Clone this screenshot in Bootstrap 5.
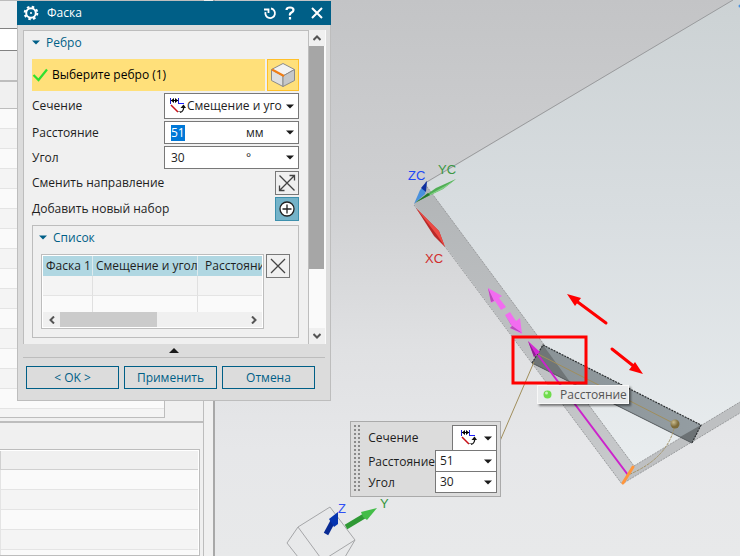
<!DOCTYPE html>
<html lang="ru">
<head>
<meta charset="utf-8">
<meta name="viewport" content="width=device-width, initial-scale=1">
<title>Фаска</title>
<link rel="stylesheet" href="https://cdn.jsdelivr.net/npm/bootstrap@5.3.0/dist/css/bootstrap.min.css">
<style>
  body { font: 12px/16px "Open Sans", "Noto Sans", sans-serif; color: #1e1e1e; background: #f0f0f0; overflow: hidden; }
  button, input, select { font: inherit; color: inherit; border-radius: 0; }
  svg { display: block; flex: none; }

  /* Navigator behind the dialog */
  .navigator { width: 215px; border-right: 2px solid #a8a8a8; overflow: hidden; }
  .nav-inner { border-right: 1px solid #bdbdbd; margin-right: 9px; }
  .nav-strip { height: 28px; border-top: 1px solid #bdbdbd; }
  .nav-search { height: 23px; background: #fff; border: solid #828282; border-width: 1px 0; }
  .nav-title { height: 29px; }
  .nav-caption { height: 28px; border-top: 2px solid #bdbdbd; }
  .tree-list { border: solid #bdbdbd; border-width: 1px 1px 1px 0; height: 310px; margin-right: 38px; overflow: hidden;
    background: repeating-linear-gradient(#fafafa 0 19px, #e4e4e4 19px 20px, #f4f4f4 20px 39px, #e4e4e4 39px 40px); }
  .detail-split { border-top: 2px solid #bdbdbd; margin-top: 3px; height: 28px; }
  .detail-list { border: 1px solid #bdbdbd; border-left: 0; margin-right: 3px; padding: 1px 1px 0 0; background: #fff; }
  .detail-head { height: 19px; background: #f0f0f0; border-bottom: 1px solid #d0d0d0; border-left: 1px solid #d0d0d0; }
  .detail-rows { border-left: 1px solid #e4e4e4; background: repeating-linear-gradient(#fafafa 0 19px, #e4e4e4 19px 20px, #f4f4f4 20px 39px, #e4e4e4 39px 40px); }

  /* Dialog */
  .dialog { left: 17px; top: 1px; width: 314px; background: #dcdcdc; border: solid #bdbdbd; border-width: 0 1px 1px; }
  .dialog-title { height: 24px; margin: 0 -1px; padding: 0 8px 0 6px; background: #005f87; color: #fff; }
  .icon-btn { border: 0; padding: 0; background: none; display: flex; align-items: center; justify-content: center; }
  .dialog-body { margin: 5px 5px 0; }
  .pane { background: #f0f0f0; border: solid #bdbdbd; border-width: 1px 1px 0; padding: 0 9px 6px 8px; }
  .scroll-v { width: 17px; background: #fafafa; }
  .scroll-v button { width: 16px; height: 16px; background: #f0f0f0; }
  .thumb-v { width: 15px; height: 223px; background: #a6a6a6; }
  .section-btn { height: 28px; padding-bottom: 5px; color: #005f87; gap: 6px; justify-content: flex-start; }
  .pick { height: 32px; background: #ffe07a; color: #000; }
  .pick-row { gap: 2px; }
  .pick-btn { width: 32px; height: 32px; background: #ffe07a; border: 1px solid #ffc02a; }
  .field-stack { display: grid; gap: 2px; margin-top: 2px; }
  .combo { width: 135px; height: 23px; background: #fff; border: 1px solid #787878; padding: 0 4px 0 6px; }
  .combo-tall { height: 26px; padding-left: 4px; }
  .combo select, .combo input { border: 0; outline: 0; padding: 0; background: none; appearance: none; min-width: 0; width: 0; }
  .combo input::selection { background: #0078d7; color: #fff; }
  .unit { width: 40px; }
  .tool-btn { width: 24px; height: 24px; border: 1px solid #787878; background: #f0f0f0; }
  .tool-on { background: #74b3c9; border-color: #3d90ad; }
  .group-box { border: 1px solid #bdbdbd; margin-top: 4px; padding: 0 8px 8px; }
  .group-box .section-btn { margin-left: -2px; }
  .list-row { gap: 2px; }
  .set-list { width: 223px; border: 1px solid #bdbdbd; padding: 1px; background: #fff; overflow: hidden; }
  .set-table { width: 100%; table-layout: fixed; border-collapse: separate; border-spacing: 0; }
  .set-table col:nth-child(1) { width: 50px; }
  .set-table col:nth-child(2) { width: 105px; }
  .set-table th { height: 20px; padding: 0 0 0 3px; font-weight: 400; background: #b0d7e2; border-right: 1px solid #dceaee; border-bottom: 1px solid #b0d7e2; white-space: nowrap; overflow: hidden; }
  .set-table td { height: 20px; padding: 0; background: #f4f4f4; border-right: 1px solid #e0e0e0; border-bottom: 1px solid #e4e4e4; }
  .set-table tr:last-child td { height: 16px; background: #fafafa; border-bottom: 0; }
  .set-table th:last-child, .set-table td:last-child { border-right: 0; }
  .set-table th:nth-child(3) { padding-left: 7px; }
  .scroll-h { height: 15px; background: #f0f0f0; }
  .scroll-h button { width: 17px; }
  .thumb-h { width: 97px; height: 15px; background: #cbcbcb; }
  .fold-bar { height: 14px; width: 100%; border-bottom: 1px solid #bdbdbd; }
  .actions { display: grid; grid-template-columns: repeat(3, 1fr); gap: 5px; margin: 8px 10px 11px 3px; }
  .actions button { height: 23px; padding: 0; border: 1px solid #005f87; background: #dcdcdc; color: #005f87; }

  /* Graphics window */
  .scene { background: linear-gradient(#c3c4c6 0, #cfd0d2 200px, #e0e1e3 350px, #e6e7e9 450px, #e8e9ea 100%); }
  .scene text { font: 13px "Liberation Sans", Arial, sans-serif; }
  .mini-bar { left: 350px; top: 421px; width: 151px; background: #dcdcdc; border: 1px solid #aaa; padding: 3px; }
  .grip { width: 8px; align-self: stretch; background: radial-gradient(circle at 1px 1px, #8a8a8a 1px, transparent 1px) 0 0 / 4px 4px; }
  .mini-bar .combo { width: 62px; height: 22px; padding: 0 4px; margin-top: -1px; }
  .mini-bar .combo-tall { width: 45px; height: 26px; margin-top: 0; padding-left: 7px; }
  .hint { left: 537px; top: 385px; height: 19px; padding: 0 1px 0 5px; gap: 8px; background: #e8eaeb; border: 1px solid #f8f8f8; color: #555; box-shadow: 2px 2px 2px #0007; }
</style>
</head>
<body>
<svg width="0" height="0" class="position-absolute" aria-hidden="true">
  <symbol id="offset-angle" viewBox="0 0 18 18">
    <path d="M1.500 1v6M9.500 1v6" stroke="#2020d8"/><path d="M10 6.500h5" stroke="#2020ff"/>
    <path d="M2 3.500h7" stroke="#000"/><path d="M2 3.500l3-2.500v5zM9 3.500L6 1v5z" fill="#000"/>
    <path d="M2 8l7 7" stroke="#c81018" stroke-width="1.500"/><path d="M9 14.500h3" stroke="#888"/>
    <path d="M14.500 9q1 5-3.500 6.500" fill="none" stroke="#111" stroke-width="1.300"/><path d="M11.500 11l3-3.500 2.500 3.500z" fill="#111"/>
  </symbol>
  <symbol id="caret" viewBox="0 0 8 5"><path d="M0 .5h8L4 4.500z" fill="#1a1a1a"/></symbol>
  <symbol id="caret-blue" viewBox="0 0 8 5"><path d="M0 .5h8L4 4.500z" fill="#005f87"/></symbol>
  <symbol id="cross" viewBox="0 0 16 16"><path d="M1 1l14 14M15 1L1 15" stroke="#444" stroke-width="1.300"/></symbol>
</svg>

<main class="d-flex vh-100 position-relative">
  <aside class="navigator flex-shrink-0 d-flex flex-column">
    <div class="nav-inner d-flex flex-column flex-grow-1">
      <div class="nav-strip"></div>
      <div class="nav-search"></div>
      <div class="nav-title"></div>
      <div class="nav-caption"></div>
      <div class="tree-list"></div>
      <div class="detail-split"></div>
      <div class="detail-list d-flex flex-column flex-grow-1">
        <div class="detail-head"></div>
        <div class="detail-rows flex-grow-1"></div>
      </div>
    </div>
  </aside>

  <section class="scene flex-grow-1 overflow-hidden" aria-label="Модель">
    <svg class="w-100 h-100" viewBox="215 0 525 556" preserveAspectRatio="xMinYMin slice">
      <defs>
        <linearGradient id="face" x1="0" y1="0" x2="0" y2="1"><stop stop-color="#ccd2d4"/><stop offset=".45" stop-color="#d8dde0"/><stop offset="1" stop-color="#e9edef"/></linearGradient>
        <linearGradient id="rim" x1="0" y1="0" x2="0" y2="1"><stop stop-color="#b2b5b7"/><stop offset="1" stop-color="#c8cacc"/></linearGradient>
        <linearGradient id="bar" x1="0" y1="0" x2="1" y2="0"><stop stop-color="#8a9397"/><stop offset="1" stop-color="#949da2"/></linearGradient>
        <radialGradient id="ball" cx=".35" cy=".3"><stop stop-color="#cbbd90"/><stop offset="1" stop-color="#7d6b3a"/></radialGradient>
      </defs>
      <path d="M425 184L733 0h7v402l-106 64z" fill="url(#face)"/>
      <path d="M414 204l11-20L634 466l-12 18z" fill="url(#rim)"/>
      <path d="M634 466l106-64v11l-118 71z" fill="#bec0c2"/>
      <g fill="none" stroke="#999b9d">
        <path d="M425 183L733 0"/><path d="M414 205l208 279 118-71M425 184l209 282 106-64" stroke-dasharray="2 1"/>
      </g>
      <path d="M543 345l158 80-9 18-160-80z" fill="url(#bar)"/>
      <path d="M543 345l-11 18 38 19z" fill="#6f7577"/>
      <path d="M701 425l-9 18-12-6z" fill="#6c7275"/>
      <path d="M532 363l11-18 158 80-9 18" fill="none" stroke="#2d3032" stroke-width="1.200" stroke-dasharray="2 1"/>
      <path d="M532 363l160 80" stroke="#555a5d"/>
      <path d="M538 354l137 70M534 362l-34 79" fill="none" stroke="#a08e5c"/>
      <path d="M675 424q-6 34-47 51" fill="none" stroke="#a39367" stroke-dasharray="3 1"/>
      <circle cx="675" cy="424" r="4.500" fill="url(#ball)"/>
      <path d="M538 355l90 120" stroke="#cc22cc" stroke-width="2"/>
      <path d="M528 341l12 11-6 5z" fill="#d428d4"/><path d="M528 341l8 14-2 2z" fill="#8e1f90"/>
      <path d="M623 483l10-16" stroke="#ff963c" stroke-width="3" stroke-linecap="round"/>
      <g fill="#f26cf0">
        <path d="M488 288l14 8-3 2 7 9-5 3-6-9-4 2z"/>
        <path d="M505 315l5-3 6 9 4-3 2 16-12-6 2-2z"/>
      </g>
      <path d="M488 288l3 14 3-1zM505 315l7 11-2 2 12 5-11-8z" fill="#b94bbb"/>
      <path d="M414 204l6-14 4-4 2 2-1 6z" fill="#4a91dc"/><path d="M421 188l6-7-1 11z" fill="#0d2f9e"/>
      <path d="M416 202l20-14 20-9-13 10z" fill="#4fae54"/><path d="M416 202l27-13 13-10-11 7z" fill="#82d086"/><path d="M415 203l15-8-2-2z" fill="#24752b"/>
      <path d="M416 208l15 15 8 8 6 16-11-11z" fill="#b82828"/><path d="M416 208l23 23 6 16-8-12z" fill="#ed4943"/>
      <text x="408" y="180" fill="#2148f5">ZC</text>
      <text x="438" y="174" fill="#3c9845">YC</text>
      <text x="425" y="263" fill="#d12d2d">XC</text>
      <g fill="none" stroke="#a5a6a8"><path d="M298 527l32-20 25 33-27 17M298 527l-11 16 11 14M298 527l22 30M355 540l-10 17"/></g>
      <path d="M326 534l7-13" stroke="#092b94" stroke-width="5"/><path d="M329 519l9-7v12l-4 3z" fill="#0634b0"/>
      <path d="M346 527l20-12" stroke="#2f9935" stroke-width="5"/><path d="M361 512l16-4-10 12-4-3z" fill="#43bd48"/>
      <text x="338" y="513" fill="#3050f4">Z</text>
      <text x="380" y="508" fill="#379642">Y</text>
      <circle cx="740" cy="6" r="1.500" fill="#4a91dc"/>
      <g fill="none" stroke="#f00" stroke-width="3">
        <rect x="513" y="337" width="73" height="46"/>
        <path d="M575 300l31 23M612 349l24 19" stroke-linecap="round"/>
      </g>
      <path d="M567 294l14 4-6 8zM643 374l-8-12-6 8z" fill="#f00"/>
    </svg>
  </section>

  <section class="dialog position-absolute" role="dialog" aria-labelledby="dlg-title">
    <header class="dialog-title d-flex align-items-center">
      <svg width="16" height="16" viewBox="0 0 16 16" fill="none" stroke="#fff"><circle cx="8" cy="8" r="4.800" stroke-width="2"/><circle cx="8" cy="8" r="6.300" stroke-width="2" stroke-dasharray="2.500 2.450"/><circle cx="8" cy="8" r="1" fill="#fff" stroke="none"/></svg>
      <span id="dlg-title" class="ms-2 flex-grow-1">Фаска</span>
      <button class="icon-btn me-1" aria-label="Сброс"><svg width="14" height="14" viewBox="0 0 14 14" fill="none" stroke="#fff" stroke-width="1.800"><path d="M8 2.500a4.800 4.800 0 1 1-5.500 3.500"/><path d="M1 3.500h4.500V7"/></svg></button>
      <button class="icon-btn ms-1" aria-label="Справка"><svg width="10" height="14" viewBox="0 0 10 14" fill="none" stroke="#fff" stroke-width="2.200"><path d="M1.500 4Q1.500 1.500 5 1.500T8.500 4Q8.500 5.500 6.500 6.500T5 9.500M5 11v2.500"/></svg></button>
      <button class="icon-btn ms-3" aria-label="Закрыть"><svg width="12" height="12" viewBox="0 0 12 12" stroke="#fff" stroke-width="2"><path d="M1 1l10 10M11 1L1 11"/></svg></button>
    </header>

    <div class="dialog-body">
      <div class="d-flex">
        <div class="pane flex-grow-1">
          <button class="icon-btn section-btn" aria-expanded="true"><svg width="8" height="5"><use href="#caret-blue"/></svg>Ребро</button>
          <div class="pick-row d-flex">
            <div class="pick d-flex align-items-center flex-grow-1">
              <svg width="16" height="14" viewBox="0 0 16 14"><path d="M1.500 7l5 5L15 1.500" fill="none" stroke="#2fe02f" stroke-width="2.200"/></svg>
              <span class="ms-1">Выберите ребро (1)</span>
            </div>
            <button class="icon-btn pick-btn" aria-label="Ребро"><svg width="26" height="26" viewBox="0 0 26 26" stroke="#8b8b8b" stroke-linejoin="round"><path d="M1.500 7.500L13 1.500l11.500 6L13 14z" fill="#f2f2f2"/><path d="M1.500 7.500L13 14v10.500L1.500 18.500z" fill="#dedfe0"/><path d="M13 14l11.500-6.500v11L13 24.500z" fill="#c5c7c9"/><path d="M2 7.500l12 6.500" stroke="#f07d14" stroke-width="2"/></svg></button>
          </div>

          <div class="field-stack">
            <div class="d-flex align-items-center justify-content-between">
              <label for="section">Сечение</label>
              <div class="combo combo-tall d-flex align-items-center">
                <svg width="18" height="18"><use href="#offset-angle"/></svg>
                <select id="section" class="flex-grow-1 me-1 overflow-hidden"><option>Смещение и угол</option></select>
                <svg width="8" height="5"><use href="#caret"/></svg>
              </div>
            </div>
            <div class="d-flex align-items-center justify-content-between">
              <label for="distance">Расстояние</label>
              <div class="combo d-flex align-items-center">
                <input id="distance" class="flex-grow-1" value="51"><span class="unit flex-shrink-0">мм</span>
                <svg width="8" height="5"><use href="#caret"/></svg>
              </div>
            </div>
            <div class="d-flex align-items-center justify-content-between">
              <label for="angle">Угол</label>
              <div class="combo d-flex align-items-center">
                <input id="angle" class="flex-grow-1" value="30"><span class="unit flex-shrink-0">°</span>
                <svg width="8" height="5"><use href="#caret"/></svg>
              </div>
            </div>
            <div class="d-flex align-items-center justify-content-between">
              <span id="lbl-flip">Сменить направление</span>
              <button class="icon-btn tool-btn" aria-labelledby="lbl-flip"><svg width="18" height="18" viewBox="0 0 18 18" fill="none" stroke="#444" stroke-width="1.300"><path d="M1.500 1.500l15 15M1.500 16.500l15-15M11.500 1.500h5v5M1.500 11.500v5h5"/></svg></button>
            </div>
            <div class="d-flex align-items-center justify-content-between">
              <span id="lbl-add">Добавить новый набор</span>
              <button class="icon-btn tool-btn tool-on" aria-labelledby="lbl-add"><svg width="16" height="16" viewBox="0 0 16 16" stroke="#222" stroke-width="1.300"><circle cx="8" cy="8" r="7" fill="#fff"/><path d="M8 3.500v9M3.500 8h9"/></svg></button>
            </div>
          </div>

          <div class="group-box">
            <button class="icon-btn section-btn" aria-expanded="true"><svg width="8" height="5"><use href="#caret-blue"/></svg>Список</button>
            <div class="list-row d-flex align-items-start">
              <div class="set-list flex-shrink-0">
                <table class="set-table">
                  <colgroup><col><col><col></colgroup>
                  <thead><tr><th>Фаска 1</th><th>Смещение и угол</th><th>Расстояние</th></tr></thead>
                  <tbody><tr><td></td><td></td><td></td></tr><tr><td></td><td></td><td></td></tr></tbody>
                </table>
                <div class="scroll-h d-flex align-items-center">
                  <button class="icon-btn" aria-label="Влево"><svg width="6" height="8" viewBox="0 0 6 8" fill="none" stroke="#555" stroke-width="2"><path d="M5 .5L1.500 4 5 7.500"/></svg></button>
                  <div class="thumb-h me-auto"></div>
                  <button class="icon-btn" aria-label="Вправо"><svg width="6" height="8" viewBox="0 0 6 8" fill="none" stroke="#555" stroke-width="2"><path d="M1 .5L4.500 4 1 7.500"/></svg></button>
                </div>
              </div>
              <button class="icon-btn tool-btn flex-shrink-0" aria-label="Удалить"><svg width="16" height="16"><use href="#cross"/></svg></button>
            </div>
          </div>
        </div>
        <div class="scroll-v d-flex flex-column flex-shrink-0">
          <button class="icon-btn" aria-label="Вверх"><svg width="8" height="6" viewBox="0 0 8 6" fill="none" stroke="#555" stroke-width="2"><path d="M.5 5L4 1.500 7.500 5"/></svg></button>
          <div class="thumb-v mb-auto"></div>
          <button class="icon-btn" aria-label="Вниз"><svg width="8" height="6" viewBox="0 0 8 6" fill="none" stroke="#555" stroke-width="2"><path d="M.5 1L4 4.500 7.500 1"/></svg></button>
        </div>
      </div>
      <button class="icon-btn fold-bar" aria-label="Свернуть"><svg width="10" height="5" viewBox="0 0 10 5"><path d="M0 5l5-5 5 5z" fill="#1a1a1a"/></svg></button>
      <footer class="actions">
        <button>&lt; OK &gt;</button>
        <button>Применить</button>
        <button>Отмена</button>
      </footer>
    </div>
  </section>

  <section class="mini-bar position-absolute d-flex" aria-label="Параметры фаски">
    <div class="grip"></div>
    <div class="flex-grow-1 ms-2">
      <div class="d-flex align-items-center justify-content-between">
        <label for="mini-section">Сечение</label>
        <div class="combo combo-tall d-flex align-items-center">
          <svg width="18" height="18"><use href="#offset-angle"/></svg>
          <select id="mini-section" class="flex-grow-1"><option label=" "></option></select>
          <svg width="8" height="5"><use href="#caret"/></svg>
        </div>
      </div>
      <div class="d-flex align-items-center justify-content-between">
        <label for="mini-distance">Расстояние</label>
        <div class="combo d-flex align-items-center flex-shrink-0"><input id="mini-distance" class="flex-grow-1" value="51"><svg width="8" height="5"><use href="#caret"/></svg></div>
      </div>
      <div class="d-flex align-items-center justify-content-between">
        <label for="mini-angle">Угол</label>
        <div class="combo d-flex align-items-center flex-shrink-0"><input id="mini-angle" class="flex-grow-1" value="30"><svg width="8" height="5"><use href="#caret"/></svg></div>
      </div>
    </div>
  </section>

  <div class="hint position-absolute d-flex align-items-center" role="tooltip">
    <svg width="9" height="9" viewBox="0 0 9 9"><circle cx="4.500" cy="4.500" r="4" fill="#6fdc4c"/><circle cx="3.500" cy="3" r="1.500" fill="#c8f5b8"/></svg>
    <span>Расстояние</span>
  </div>
</main>
<script src="https://cdn.jsdelivr.net/npm/bootstrap@5.3.0/dist/js/bootstrap.bundle.min.js"></script>
<script>
  const distance = document.getElementById('distance');
  distance.focus();
  distance.select();
</script>
</body>
</html>
